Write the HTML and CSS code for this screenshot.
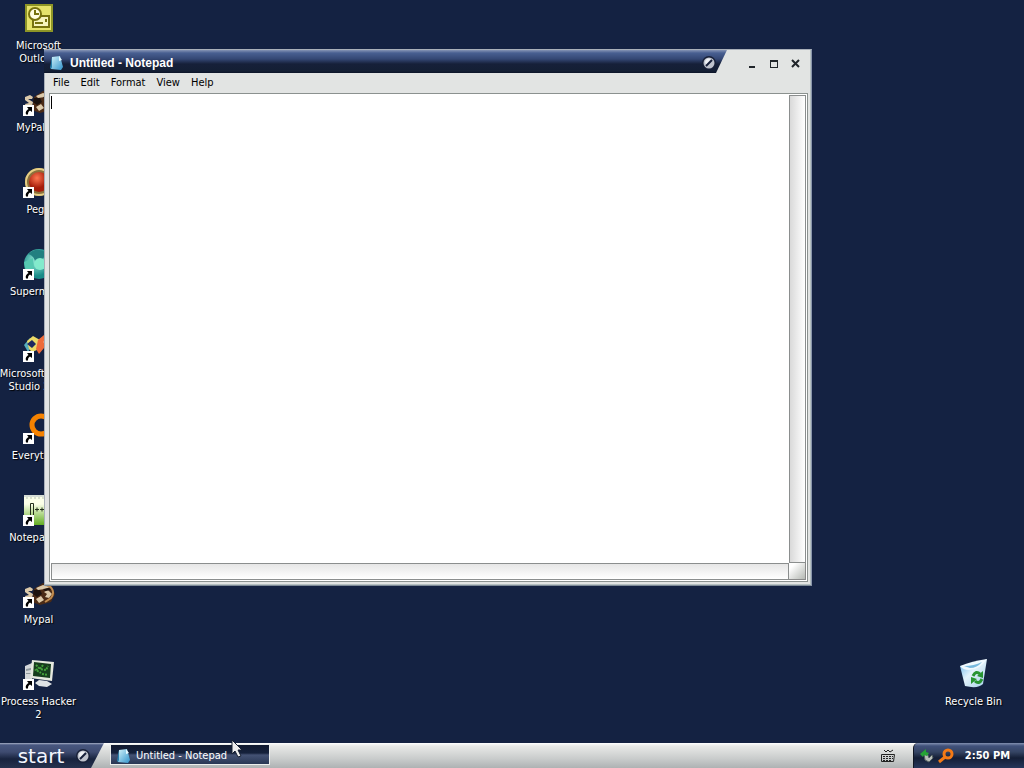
FILE: index.html
```html
<!DOCTYPE html>
<html lang="en">
<head>
<meta charset="utf-8">
<meta name="viewport" content="width=device-width, initial-scale=1">
<title>Desktop</title>
<link rel="stylesheet" href="styles.css">
</head>
<body>
<svg class="symbols" aria-hidden="true">
  <defs>
    <linearGradient id="note" x1="0" y1="0" x2="1" y2="1"><stop offset="0" stop-color="#d2f3fa"/><stop offset="1" stop-color="#3193cb"/></linearGradient>
    <linearGradient id="lime" x1="0" y1="0" x2="0" y2="1"><stop offset=".3" stop-color="#fbffe8"/><stop offset="1" stop-color="#62ad22"/></linearGradient>
    <linearGradient id="bin" x1="0" y1="0" x2="1" y2="1"><stop offset="0" stop-color="#5fb1e9"/><stop offset=".45" stop-color="#e3f3fb"/><stop offset="1" stop-color="#a2cde7"/></linearGradient>
    <radialGradient id="ruby" cx=".4" cy=".3"><stop offset="0" stop-color="#ff7751"/><stop offset="1" stop-color="#a51c0a"/></radialGradient>
    <radialGradient id="teal" cx=".4" cy=".4"><stop offset="0" stop-color="#a2f2df"/><stop offset="1" stop-color="#198b88"/></radialGradient>
  </defs>
  <symbol id="arrow" viewBox="0 0 11 11"><path fill="#fff" d="M0 0h11v11H0z"/><path fill="#000" d="M4 2h5v5L7 5.600C5.500 6.500 5 7.500 5 9.500H3C2 7 3.500 5 5.500 4z"/></symbol>
  <symbol id="notepad" viewBox="0 0 16 16"><path fill="url(#note)" d="M3 2l8-1 3 11-2 3-10-1z"/><path fill="#267fac" d="M3 2l0 10-1 2-1-1z"/><path fill="#e7faff" d="M10 1l3 4-3 1z"/></symbol>
  <symbol id="badge" viewBox="0 0 16 16"><circle cx="8" cy="8" r="7" fill="#182038"/><circle cx="8" cy="8" r="5.500" fill="#bfc3cd"/><path fill="#eff1f5" d="M4 7a4 4 0 0 1 6-3L5 10z"/><path stroke="#17203a" stroke-width="2" d="M5 11l6-6"/></symbol>
  <symbol id="raccoon" viewBox="0 0 32 32"><path fill="#4b2b16" d="M11 12l9-6 8 2 4 9-4 8-11 3-8-3z"/><path fill="#dccaab" d="M2 12l5-2 3 2-1 2-4 0 5 3-1 4-6 1-1-3 4-1-4-3zM13 11l7-3 7 2-5 2-7 1zM21 15l4-2 4 4-3 4-4-1 2-3zM13 22l5-3 3 4-5 3z"/><path fill="#1c1310" d="M11 13h6l2 4-5 3-4-3zM20 12l6-1 2 2-6 1z"/><path stroke="#bf8b50" stroke-width="2" fill="none" d="M21 8c9 0 11 8 7 13l-6 4"/></symbol>
</svg>

<div class="screen">
  <main class="desktop">
    <div class="column">
      <button class="shortcut"><svg class="icon" viewBox="0 0 32 32"><path fill="#8e9526" d="M2 1h28v28H2z"/><path fill="#e6e36b" d="M4 3h24v24H4z"/><path fill="#f7f4bd" stroke="#77720f" stroke-width="2" d="M12 13h14v11H10v-7"/><circle cx="12" cy="11" r="6" fill="#fffde2" stroke="#77720f" stroke-width="2"/><path fill="none" stroke="#77720f" stroke-width="2" d="M12 7v4h4M12 20h8m3-4v3"/></svg><span>Microsoft Outlook</span></button>
      <button class="shortcut"><svg class="icon"><use href="#raccoon"/></svg><svg class="link"><use href="#arrow"/></svg><span>MyPal 68</span></button>
      <button class="shortcut"><svg class="icon" viewBox="0 0 32 32"><circle cx="16" cy="15" r="14" fill="#8b713c"/><circle cx="16" cy="15" r="13" fill="none" stroke="#e6cf85" stroke-width="2"/><circle cx="16" cy="15" r="10" fill="url(#ruby)"/></svg><svg class="link"><use href="#arrow"/></svg><span>Pegg</span></button>
      <button class="shortcut"><svg class="icon" viewBox="0 0 32 32"><circle cx="16" cy="15" r="15" fill="url(#teal)"/><path fill="#227f80" d="M5 5Q14-3 24 4 17 15 12 14 12 7 5 5"/><circle cx="17" cy="15" r="6" fill="#83ebcc"/><path fill="#56c9b1" d="M1 13l9-4 1 10-8 4z"/></svg><svg class="link"><use href="#arrow"/></svg><span>Supermium</span></button>
      <button class="shortcut"><svg class="icon" viewBox="0 0 32 32"><path fill="#56aebc" d="M1 14l6-7 5 3-7 11z"/><path fill="#ebda67" d="M4 10l6-5 7 4-3 10-5 2-3-3z"/><path fill="#1d2860" d="M4 13l5-4 4 4-4 4z"/><path fill="#ed6c3b" d="M15 9l6-5 10 13-5 5-5-5-5 6-3-5z"/><path fill="#f4a078" d="M20 11l5-7 5 3-7 8z"/></svg><svg class="link"><use href="#arrow"/></svg><span class="wide">Microsoft Visual<br>Studio 2010</span></button>
      <button class="shortcut"><svg class="icon" viewBox="0 0 32 32"><circle cx="18" cy="12" r="9" fill="none" stroke="#f58200" stroke-width="5"/><path stroke="#f58200" stroke-width="5" d="M23 20l6 8"/></svg><svg class="link"><use href="#arrow"/></svg><span>Everything</span></button>
      <button class="shortcut"><svg class="icon" viewBox="0 0 32 32"><path fill="url(#lime)" d="M1 0h29v30H1z"/><path fill="none" stroke="#d5ddd5" stroke-width="2" d="M1 1h29"/><path stroke="#b8c3b1" stroke-dasharray="2 2" d="M3 3h26"/><path fill="none" stroke="#25311c" d="M7.500 20V8.500h3V20M12 14.500h4m-2-2v4m3-2h4m-2-2v4"/></svg><svg class="link"><use href="#arrow"/></svg><span>Notepad++</span></button>
      <button class="shortcut"><svg class="icon"><use href="#raccoon"/></svg><svg class="link"><use href="#arrow"/></svg><span>Mypal</span></button>
      <button class="shortcut"><svg class="icon" viewBox="0 0 32 32"><path fill="#d4d8da" d="M2 7l7-3v21l-7-3z"/><path fill="#8f999d" d="M3 10l5-1v2l-5 1zM3 14h5v1H3z"/><path fill="#e6e9df" d="M9 1l22 2-2 19-22-3z"/><path fill="#163d1d" d="M11 3l17 2-1 14-17-2z"/><path fill="none" stroke="#43a13b" stroke-width="2" stroke-dasharray="2 1" d="M13 6l3 3-3 2 5 3M20 6l-3 4 6 1 2-4M19 15l6 1"/><path fill="#dfe3e5" d="M16 21l8 1 5 3-5 3-8-1-4-3z"/></svg><svg class="link"><use href="#arrow"/></svg><span>Process Hacker 2</span></button>
    </div>
    <div class="column">
      <button class="shortcut"><svg class="icon" viewBox="0 0 32 32"><path fill="url(#bin)" d="M2 7Q15 7 29 0l-4 25q-5 5-18 2z"/><path fill="#f0faff" d="M2 7Q14 2 29 0q-6 10-18 11Q5 11 2 7"/><path fill="#77b9df" d="M6 7q10 0 18-4-5 6-12 6z"/><path fill="none" stroke="#289432" stroke-width="3" d="M15 17q3-6 7-2M24 20q-3 6-7 2"/><path fill="#289432" d="M25 12v7l-6-2zM13 25v-7l6 2z"/></svg><span>Recycle Bin</span></button>
    </div>

    <section class="window" aria-label="Untitled - Notepad">
      <header class="caption">
        <div class="title"><svg class="small"><use href="#notepad"/></svg><h1>Untitled - Notepad</h1><svg class="small"><use href="#badge"/></svg></div>
        <div class="controls">
          <button aria-label="Minimize"><svg viewBox="0 0 10 10"><path stroke="#20252a" stroke-width="2" d="M2 8h6"/></svg></button>
          <button aria-label="Maximize"><svg viewBox="0 0 10 10"><path fill="#20252a" d="M1 1h8v8H1zM2 3v5h6V3z" fill-rule="evenodd"/></svg></button>
          <button aria-label="Close"><svg viewBox="0 0 10 10"><path stroke="#20252a" stroke-width="2" d="M1 1l7 7M8 1L1 8"/></svg></button>
        </div>
      </header>
      <nav class="menu"><button>File</button><button>Edit</button><button>Format</button><button>View</button><button>Help</button></nav>
      <div class="editor">
        <div class="page"><textarea aria-label="Document text" spellcheck="false"></textarea><i class="caret"></i></div>
        <div class="track vertical"></div>
        <div class="track horizontal"></div>
        <div class="grip"></div>
      </div>
    </section>
  </main>

  <footer class="taskbar">
    <button class="start"><span>start</span><svg class="small"><use href="#badge"/></svg></button>
    <button class="task"><svg class="small"><use href="#notepad"/></svg><span>Untitled - Notepad</span></button>
    <button class="keyboard" aria-label="Keyboard"><svg viewBox="0 0 16 14"><path fill="none" stroke="#222" d="M4 1l2 2 2-2 2 2 3-2M1.500 5.500h13l-1 7h-12z"/><path stroke="#222" stroke-dasharray="2 1" d="M3 7.500h10M3 9.500h10M3 11.500h9"/></svg></button>
    <div class="tray">
      <svg class="small" viewBox="0 0 16 16"><path fill="#b9beb9" stroke="#566263" d="M5 6l3-1 2 5 3-3 1 3-4 4-4-2z"/><path fill="#26a335" d="M1 6l6-5v3l3 1-2 3-3-1-1 2z"/></svg>
      <svg class="small" viewBox="0 0 16 16"><circle cx="10" cy="6" r="4" fill="none" stroke="#f47a16" stroke-width="3"/><path stroke="#f47a16" stroke-width="3" d="M7 9l-6 5"/></svg>
      <time>2:50 PM</time>
    </div>
  </footer>
  <svg class="pointer" viewBox="0 0 12 19" aria-hidden="true"><path fill="#eee" stroke="#172033" d="M1 1v14l3-3 3 6 3-1-3-6h4z"/></svg>
</div>
</body>
</html>
```
FILE: styles.css
```css
* { box-sizing: border-box; }
body {
  margin: 0;
  font: 11px/13px "DejaVu Sans Condensed", Tahoma, sans-serif;
  color: #000;
}
button { margin: 0; padding: 0; border: 0; background: none; font: inherit; color: inherit; }
svg { display: block; flex: none; }
.symbols { position: absolute; width: 0; height: 0; }
.screen {
  position: relative;
  display: flex;
  flex-direction: column;
  min-height: 100vh;
  background: #142242;
  overflow: hidden;
}
.desktop {
  flex: 1;
  display: flex;
  justify-content: space-between;
  align-items: stretch;
  padding-right: 12px;
  padding-bottom: 5px;
}
.column { display: flex; flex-direction: column; width: 77px; }
.column + .column { justify-content: flex-end; }
.shortcut {
  display: grid;
  grid-template-columns: 77px;
  grid-template-rows: 34px auto;
  justify-items: center;
  align-content: start;
  row-gap: 2px;
  height: 82px;
  padding-top: 3px;
  color: #fff;
  text-shadow: 1px 1px 1px #000;
}
.shortcut > * { grid-column: 1; }
.icon { grid-row: 1; width: 32px; height: 32px; }
.link { grid-row: 1; align-self: end; width: 11px; height: 11px; margin-right: 21px; margin-bottom: 3px; }
.column span { grid-row: 2; }
.wide { white-space: nowrap; }
.small { width: 16px; height: 16px; }

.window {
  position: absolute;
  left: 44px;
  top: 49px;
  width: 768px;
  height: 537px;
  display: flex;
  flex-direction: column;
  padding: 0 3px 3px 4px;
  background: #e2e4e3;
  border: 1px solid #a9b0b9;
  border-right-color: #8995ab;
  border-bottom-color: #7e8b98;
  box-shadow: inset -1px -1px #b5c0c1;
}
.caption { display: flex; justify-content: space-between; margin: 0 0 0 -5px; }
.title {
  flex: 1;
  display: flex;
  align-items: center;
  gap: 5px;
  height: 23px;
  padding: 2px 10px 0 5px;
  color: #fff;
  background: linear-gradient(#8593b4 0, #485f91 3px, #344774 9px, #162039 14px, #141f34 21px, #0b1428 23px);
  clip-path: polygon(0 0, 100% 0, calc(100% - 11px) 100%, 0 100%);
}
.title h1 { flex: 1; margin: 0; font: bold 12px/16px "Liberation Sans", Arial, sans-serif; }
.controls { display: flex; gap: 12px; padding: 9px 7px 0 20px; }
.controls button { width: 10px; height: 10px; }
.controls svg { width: 10px; height: 10px; }
.menu { display: flex; align-items: flex-start; gap: 11px; height: 20px; padding: 0 4px; }
.menu button { line-height: 20px; }
.editor {
  flex: 1;
  display: grid;
  grid-template-columns: 1fr 17px;
  grid-template-rows: 1fr 17px;
  padding: 1px;
  border: 1px solid #8b918f;
  background: #fff;
}
.page { position: relative; }
.page textarea { display: block; width: 100%; height: 100%; padding: 1px 2px; border: 0; outline: 0; resize: none; font: inherit; }
.caret { position: absolute; left: 0; top: 1px; width: 1px; height: 13px; background: #000; }
.track { border: 1px solid #8b8e8e; }
.vertical { background: linear-gradient(90deg, #d9d9d9, #fff); }
.horizontal { background: linear-gradient(#e6e6e6, #fff); }
.grip { border-right: 1px solid #888; border-bottom: 1px solid #888; background: linear-gradient(135deg, #fff 20%, #b4b8b3); }

.taskbar {
  display: flex;
  align-items: stretch;
  height: 25px;
  background: linear-gradient(#fff 0, #e8e9e7 3px, #c8cbcb 16px, #aeb2b3);
}
.start {
  display: flex;
  align-items: center;
  gap: 6px;
  width: 104px;
  padding-left: 13px;
  color: #f3f6ff;
  background: linear-gradient(#a6afc6 0, #485780 2px, #3e4b70 9px, #18233e 16px, #26324e);
  clip-path: polygon(0 0, 100% 0, calc(100% - 13px) 100%, 0 100%);
}
.start span { width: 56px; font: 20px/20px "DejaVu Sans", sans-serif; }
.task {
  display: flex;
  align-items: center;
  gap: 4px;
  width: 160px;
  margin: 1px auto 3px 6px;
  padding: 2px 5px 0;
  color: #fff;
  background: linear-gradient(#10192f, #15213b 8px, #445274 10px, #293754);
  border: 1px solid #eceeec;
}
.keyboard { align-self: center; margin-right: 17px; }
.keyboard svg { width: 16px; height: 14px; }
.tray {
  display: flex;
  align-items: center;
  gap: 3px;
  padding: 0 14px 0 5px;
  color: #fff;
  background: linear-gradient(#8290b0 0, #40517b 3px, #354463 9px, #141e36 15px, #26365a);
  border-left: 1px solid #101624;
  border-radius: 5px 0 0 0;
}
.tray time { margin-left: 8px; font: bold 11px/13px "DejaVu Sans Condensed", Tahoma, sans-serif; }
.pointer { position: absolute; left: 231px; bottom: 10px; width: 12px; height: 19px; }
```
